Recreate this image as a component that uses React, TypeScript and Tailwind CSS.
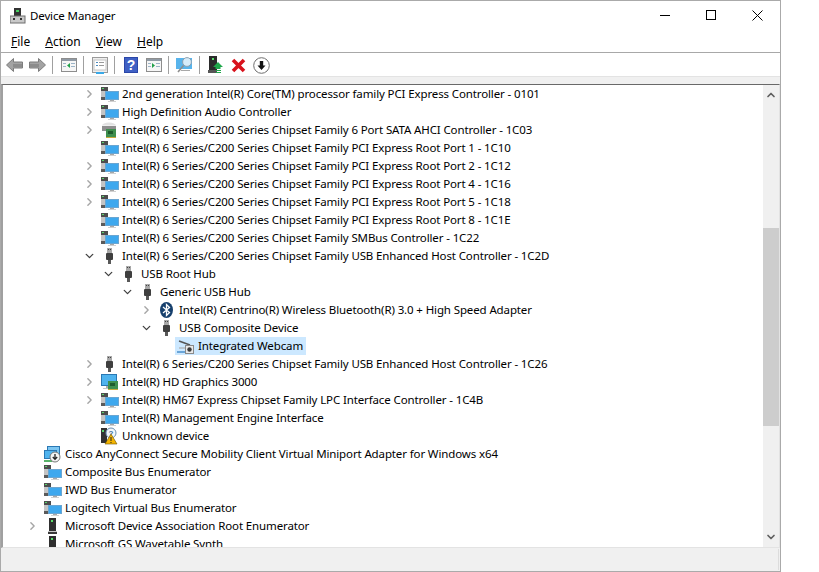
import { ChevronDown, ChevronRight, ChevronUp } from 'lucide-react';

type IconKind = 'pc' | 'usb' | 'disk' | 'bluetooth' | 'webcam' | 'gpu' | 'unknown' | 'network' | 'tower';
type Toggle = 'open' | 'closed' | 'none';

interface DeviceRow {
  label: string;
  depth: number;
  icon: IconKind;
  toggle: Toggle;
  selected?: boolean;
}

const chipset = 'Intel(R) 6 Series/C200 Series Chipset Family';

const rows: DeviceRow[] = [
  { label: '2nd generation Intel(R) Core(TM) processor family PCI Express Controller - 0101', depth: 3, icon: 'pc', toggle: 'closed' },
  { label: 'High Definition Audio Controller', depth: 3, icon: 'pc', toggle: 'closed' },
  { label: `${chipset} 6 Port SATA AHCI Controller - 1C03`, depth: 3, icon: 'disk', toggle: 'closed' },
  { label: `${chipset} PCI Express Root Port 1 - 1C10`, depth: 3, icon: 'pc', toggle: 'none' },
  { label: `${chipset} PCI Express Root Port 2 - 1C12`, depth: 3, icon: 'pc', toggle: 'closed' },
  { label: `${chipset} PCI Express Root Port 4 - 1C16`, depth: 3, icon: 'pc', toggle: 'closed' },
  { label: `${chipset} PCI Express Root Port 5 - 1C18`, depth: 3, icon: 'pc', toggle: 'closed' },
  { label: `${chipset} PCI Express Root Port 8 - 1C1E`, depth: 3, icon: 'pc', toggle: 'none' },
  { label: `${chipset} SMBus Controller - 1C22`, depth: 3, icon: 'pc', toggle: 'none' },
  { label: `${chipset} USB Enhanced Host Controller - 1C2D`, depth: 3, icon: 'usb', toggle: 'open' },
  { label: 'USB Root Hub', depth: 4, icon: 'usb', toggle: 'open' },
  { label: 'Generic USB Hub', depth: 5, icon: 'usb', toggle: 'open' },
  { label: 'Intel(R) Centrino(R) Wireless Bluetooth(R) 3.0 + High Speed Adapter', depth: 6, icon: 'bluetooth', toggle: 'closed' },
  { label: 'USB Composite Device', depth: 6, icon: 'usb', toggle: 'open' },
  { label: 'Integrated Webcam', depth: 7, icon: 'webcam', toggle: 'none', selected: true },
  { label: `${chipset} USB Enhanced Host Controller - 1C26`, depth: 3, icon: 'usb', toggle: 'closed' },
  { label: 'Intel(R) HD Graphics 3000', depth: 3, icon: 'gpu', toggle: 'closed' },
  { label: 'Intel(R) HM67 Express Chipset Family LPC Interface Controller - 1C4B', depth: 3, icon: 'pc', toggle: 'closed' },
  { label: 'Intel(R) Management Engine Interface', depth: 3, icon: 'pc', toggle: 'none' },
  { label: 'Unknown device', depth: 3, icon: 'unknown', toggle: 'none' },
  { label: 'Cisco AnyConnect Secure Mobility Client Virtual Miniport Adapter for Windows x64', depth: 0, icon: 'network', toggle: 'none' },
  { label: 'Composite Bus Enumerator', depth: 0, icon: 'pc', toggle: 'none' },
  { label: 'IWD Bus Enumerator', depth: 0, icon: 'pc', toggle: 'none' },
  { label: 'Logitech Virtual Bus Enumerator', depth: 0, icon: 'pc', toggle: 'none' },
  { label: 'Microsoft Device Association Root Enumerator', depth: 0, icon: 'tower', toggle: 'closed' },
  { label: 'Microsoft GS Wavetable Synth', depth: 0, icon: 'tower', toggle: 'none' },
];

function DeviceIcon({ kind }: { kind: IconKind }) {
  return (
    <svg width="18" height="18" viewBox="0 0 18 18" className="shrink-0">
      {kind === 'pc' && (
        <>
          <rect x="0" y="2" width="7" height="13" fill="#c4c4c4" />
          <rect x="0" y="2" width="7" height="4" fill="#4d4d4d" />
          <rect x="1" y="3" width="2" height="1" fill="#59d46a" />
          <rect x="0" y="12" width="4" height="3" fill="#5a5a5a" />
          <rect x="4" y="6" width="14" height="9" fill="#6aa6d2" />
          <rect x="5" y="7" width="12" height="7" fill="#3ea8ee" />
          <rect x="9" y="15" width="4" height="1" fill="#a8a8a8" />
          <rect x="7" y="16" width="8" height="1" fill="#d0d0d0" />
        </>
      )}
      {kind === 'usb' && (
        <>
          <rect x="6" y="1" width="5" height="5" fill="#a8a8a8" />
          <rect x="7" y="2" width="1" height="1" fill="#444" />
          <rect x="9" y="2" width="1" height="1" fill="#444" />
          <rect x="5" y="6" width="7" height="7" rx="1" fill="#3f3f3f" />
          <rect x="7" y="13" width="3" height="4" fill="#585858" />
        </>
      )}
      {kind === 'disk' && (
        <>
          <ellipse cx="8" cy="4.5" rx="7" ry="3" fill="#e2e2e2" />
          <rect x="1" y="5" width="14" height="5" fill="#8f8f8f" />
          <rect x="1" y="4" width="14" height="1" fill="#f0f0f0" />
          <rect x="5" y="8" width="10" height="8" fill="#3f8f4f" />
          <rect x="7" y="10" width="5" height="3" fill="#1f5c2e" />
          <rect x="5" y="16" width="10" height="1" fill="#c9a93c" />
        </>
      )}
      {kind === 'bluetooth' && (
        <>
          <ellipse cx="8.5" cy="9" rx="6.5" ry="8" fill="#17406d" />
          <polyline points="5,6 11.5,11.5 8.5,14.5 8.5,3.5 11.5,6.5 5,12" fill="none" stroke="#fff" strokeWidth="1.3" />
        </>
      )}
      {kind === 'webcam' && (
        <>
          <line x1="2" y1="4" x2="13" y2="8" stroke="#555" strokeWidth="1.5" />
          <rect x="2" y="10" width="7" height="2" fill="#b8c4ce" />
          <rect x="0" y="14" width="9" height="2" fill="#6aa5d8" />
          <rect x="8.5" y="8.5" width="8" height="8" fill="#e9e9e9" stroke="#8a8a8a" />
          <circle cx="12.5" cy="12.5" r="2.2" fill="#3a3a3a" />
        </>
      )}
      {kind === 'gpu' && (
        <>
          <rect x="0" y="1" width="16" height="12" fill="#2a78b4" />
          <rect x="1" y="2" width="14" height="10" fill="#4fb3ee" />
          <rect x="5" y="13" width="3" height="2" fill="#aaa" />
          <rect x="2" y="15" width="8" height="1" fill="#c8c8c8" />
          <rect x="7" y="8" width="10" height="8" fill="#3f8f4f" />
          <rect x="9" y="10" width="5" height="3" fill="#1f5c2e" />
          <rect x="7" y="16" width="10" height="1" fill="#c9a93c" />
        </>
      )}
      {kind === 'unknown' && (
        <>
          <rect x="0" y="1" width="6" height="15" fill="#333" />
          <rect x="1" y="3" width="2" height="2" fill="#59d46a" />
          <circle cx="10" cy="6" r="5" fill="#f2f6fa" stroke="#6c8fb0" />
          <text x="10" y="9" textAnchor="middle" fontSize="8" fontWeight="700" fill="#3f6f9f" fontFamily="Liberation Sans, sans-serif">?</text>
          <polygon points="10,7 16,17 4,17" fill="#f4b400" stroke="#6b5200" strokeWidth="0.6" />
          <rect x="9.5" y="10" width="1" height="4" fill="#222" />
          <rect x="9.5" y="15" width="1" height="1" fill="#222" />
        </>
      )}
      {kind === 'network' && (
        <>
          <rect x="3" y="1" width="13" height="9" fill="#2a78b4" />
          <rect x="4" y="2" width="11" height="7" fill="#7cc6f2" />
          <rect x="0" y="5" width="13" height="9" fill="#2a78b4" />
          <rect x="1" y="6" width="11" height="7" fill="#4fb3ee" />
          <rect x="0" y="15" width="8" height="2" fill="#58b368" />
          <circle cx="11" cy="12" r="5" fill="#f4f4f4" stroke="#777" />
          <path d="M11 9v5M8.8 12l2.2 2.4L13.2 12" fill="none" stroke="#222" strokeWidth="1.3" />
        </>
      )}
      {kind === 'tower' && (
        <>
          <rect x="5" y="1" width="7" height="13" fill="#2f2f2f" />
          <rect x="7" y="3" width="2" height="2" fill="#59e06a" />
          <rect x="4" y="14" width="9" height="3" fill="#3a3a3a" />
          <rect x="4" y="14" width="9" height="1" fill="#c8c8c8" />
        </>
      )}
    </svg>
  );
}

function BackIcon({ flip }: { flip?: boolean }) {
  return (
    <svg width="17" height="14" viewBox="0 0 17 14" className={flip ? '-scale-x-100' : ''}>
      <polygon points="0.5,7 7.5,0.5 7.5,4 16.5,4 16.5,10 7.5,10 7.5,13.5" fill="#a3a3a3" stroke="#7d7d7d" />
      <rect x="7" y="6" width="9" height="3" fill="#8c8c8c" />
    </svg>
  );
}

function PaneIcon({ arrow }: { arrow: 'left' | 'right' }) {
  return (
    <svg width="16" height="14" viewBox="0 0 16 14">
      <rect x="0.5" y="0.5" width="15" height="13" fill="#f6f6f6" stroke="#8d8d8d" />
      <rect x="1" y="1" width="14" height="2" fill="#8f9aa5" />
      <rect x="10" y="5" width="4" height="1" fill="#9cb4c8" />
      <rect x="10" y="8" width="4" height="1" fill="#9cb4c8" />
      <rect x="2" y="5" width="3" height="1" fill="#9cb4c8" />
      <rect x="2" y="8" width="3" height="1" fill="#9cb4c8" />
      <polygon points={arrow === 'left' ? '9,5 6,7.5 9,10' : '6,5 9,7.5 6,10'} fill="#22a04a" />
    </svg>
  );
}

function ToolButton({ children }: { children: React.ReactNode }) {
  return <div className="flex h-[22px] w-[23px] items-center justify-center">{children}</div>;
}

function ToolSeparator() {
  return <div className="ml-[3px] mr-[4px] h-[18px] w-px bg-[#a0a0a0]" />;
}

function Toolbar() {
  return (
    <div className="flex h-[23px] shrink-0 items-center bg-white pl-[2px] pt-[1px]">
      <ToolButton><BackIcon /></ToolButton>
      <ToolButton><BackIcon flip /></ToolButton>
      <ToolSeparator />
      <ToolButton><PaneIcon arrow="left" /></ToolButton>
      <ToolSeparator />
      <ToolButton>
        <svg width="16" height="17" viewBox="0 0 16 17">
          <rect x="0.5" y="0.5" width="15" height="15" fill="#eeeeee" stroke="#9a9a9a" />
          <rect x="2" y="3" width="12" height="10" fill="#fff" stroke="#c4c4c4" />
          <rect x="4" y="5" width="2" height="1" fill="#4b89bd" />
          <rect x="7" y="5" width="5" height="1" fill="#9a9a9a" />
          <rect x="4" y="8" width="2" height="1" fill="#4b89bd" />
          <rect x="7" y="8" width="5" height="1" fill="#9a9a9a" />
          <rect x="4" y="15" width="8" height="2" fill="#39a9e8" />
        </svg>
      </ToolButton>
      <ToolSeparator />
      <ToolButton>
        <svg width="14" height="16" viewBox="0 0 14 16">
          <rect width="14" height="16" fill="#2a46a8" />
          <rect x="1" y="1" width="12" height="14" fill="#3f60c4" />
          <text x="7" y="13" textAnchor="middle" fontSize="14" fontWeight="700" fill="#fff" fontFamily="Liberation Sans, sans-serif">?</text>
        </svg>
      </ToolButton>
      <ToolButton><PaneIcon arrow="right" /></ToolButton>
      <ToolSeparator />
      <ToolButton>
        <svg width="17" height="16" viewBox="0 0 17 16">
          <rect x="0" y="1" width="16" height="11" fill="#58b4ec" />
          <rect x="5" y="13" width="9" height="1" fill="#a8a8a8" />
          <circle cx="11" cy="5" r="4.4" fill="#d6ecfa" stroke="#8fa0ae" />
          <line x1="7.5" y1="8.5" x2="2" y2="15" stroke="#8e8e8e" strokeWidth="1.6" />
        </svg>
      </ToolButton>
      <ToolSeparator />
      <ToolButton>
        <svg width="15" height="18" viewBox="0 0 15 18">
          <rect x="1" y="0" width="8" height="14" fill="#2b2b2b" />
          <rect x="4" y="2" width="2" height="2" fill="#59e06a" />
          <rect x="0" y="14" width="9" height="3" fill="#555" />
          <polygon points="10,6 15,11 12.5,11 12.5,13 7.5,13 7.5,11 5,11" fill="#1fa84a" />
          <rect x="8" y="14" width="5" height="1" fill="#1fa84a" />
          <rect x="8" y="16" width="5" height="1" fill="#1fa84a" />
        </svg>
      </ToolButton>
      <ToolButton>
        <svg width="15" height="15" viewBox="0 0 15 15">
          <path d="M2 2l11 11M13 2L2 13" stroke="#d8121c" strokeWidth="3.6" />
        </svg>
      </ToolButton>
      <ToolButton>
        <svg width="17" height="17" viewBox="0 0 17 17">
          <circle cx="8.5" cy="8.5" r="7.8" fill="#fff" stroke="#6e6e6e" />
          <polygon points="8.5,13 4.5,8.5 6.8,8.5 6.8,4 10.2,4 10.2,8.5 12.5,8.5" fill="#111" />
        </svg>
      </ToolButton>
    </div>
  );
}

function MenuLabel({ first, rest }: { first: string; rest: string }) {
  return (
    <span>
      <span className="underline">{first}</span>
      {rest}
    </span>
  );
}

function TreeRow({ row }: { row: DeviceRow }) {
  return (
    <div className="flex h-[18px] items-center" style={{ paddingLeft: 23 + row.depth * 19 }}>
      <div className="flex w-[13px] items-center justify-center">
        {row.toggle === 'closed' && <ChevronRight size={14} strokeWidth={2.6} className="text-[#a6a6a6]" />}
        {row.toggle === 'open' && <ChevronDown size={14} strokeWidth={2.4} className="text-[#404040]" />}
      </div>
      <div className={`ml-[3px] flex h-[18px] items-center pl-[2px] pr-[3px] ${row.selected ? 'bg-[#cce8ff]' : ''}`}>
        <DeviceIcon kind={row.icon} />
        <span className="ml-[3px] whitespace-nowrap">{row.label}</span>
      </div>
    </div>
  );
}

export default function App() {
  return (
    <div className="h-[572px] w-[819px] overflow-hidden bg-white font-['Noto_Sans',sans-serif] text-[11.5px] leading-[18px] tracking-[-0.125px] text-black">
      <div className="flex h-[572px] w-[781px] flex-col border border-[#aaaaaa]">
        <div className="flex h-[30px] shrink-0 items-center pl-[9px]">
          <svg width="16" height="16" viewBox="0 0 16 16" className="shrink-0">
            <rect x="4" y="0" width="7" height="8" fill="#333" />
            <rect x="6" y="2" width="3" height="2" fill="#45d060" />
            <rect x="0" y="8" width="15" height="7" fill="#c9c9c9" stroke="#6e6e6e" />
            <rect x="3" y="10" width="2" height="2" fill="#333" />
            <rect x="10" y="10" width="2" height="2" fill="#333" />
          </svg>
          <span className="ml-[4px]">Device Manager</span>
          <div className="ml-auto flex items-center pb-[2px]">
            <div className="flex h-[20px] w-[46px] items-center justify-center">
              <div className="h-px w-[10px] bg-black" />
            </div>
            <div className="flex h-[20px] w-[46px] items-center justify-center">
              <div className="h-[10px] w-[10px] border border-black" />
            </div>
            <div className="flex h-[20px] w-[46px] items-center justify-center">
              <svg width="11" height="11" viewBox="0 0 11 11">
                <path d="M0.5 0.5l10 10M10.5 0.5l-10 10" stroke="#000" strokeWidth="1" fill="none" />
              </svg>
            </div>
          </div>
        </div>
        <div className="flex h-[22px] shrink-0 items-center gap-[15px] border-b border-[#a8a8a8] pl-[10px] text-[12px] tracking-normal">
          <MenuLabel first="F" rest="ile" />
          <MenuLabel first="A" rest="ction" />
          <MenuLabel first="V" rest="iew" />
          <MenuLabel first="H" rest="elp" />
        </div>
        <Toolbar />
        <div className="h-[8px] shrink-0 border-t border-[#e3e3e3] bg-[#f0f0f0]" />
        <div className="flex min-h-0 flex-1 border-l-2 border-r border-t border-b border-l-[#a0a0a0] border-t-[#696969] border-r-[#e3e3e3] border-b-[#e3e3e3]">
          <div className="min-w-0 flex-1 overflow-hidden">
            {rows.map((row) => (
              <TreeRow key={row.label} row={row} />
            ))}
          </div>
          <div className="flex w-[16px] shrink-0 flex-col bg-[#f0f0f0]">
            <div className="flex h-[17px] items-center justify-center pt-[3px]">
              <ChevronUp size={12} strokeWidth={3.4} className="text-[#606060]" />
            </div>
            <div className="mt-[126px] h-[198px] bg-[#cdcdcd]" />
            <div className="flex-1" />
            <div className="flex h-[17px] items-center justify-center pb-[3px]">
              <ChevronDown size={12} strokeWidth={3.4} className="text-[#606060]" />
            </div>
          </div>
        </div>
        <div className="flex h-[23px] shrink-0 justify-end bg-[#f0f0f0] py-[1px] pr-[1px]">
          <div className="w-px bg-[#dcdcdc]" />
        </div>
      </div>
    </div>
  );
}
